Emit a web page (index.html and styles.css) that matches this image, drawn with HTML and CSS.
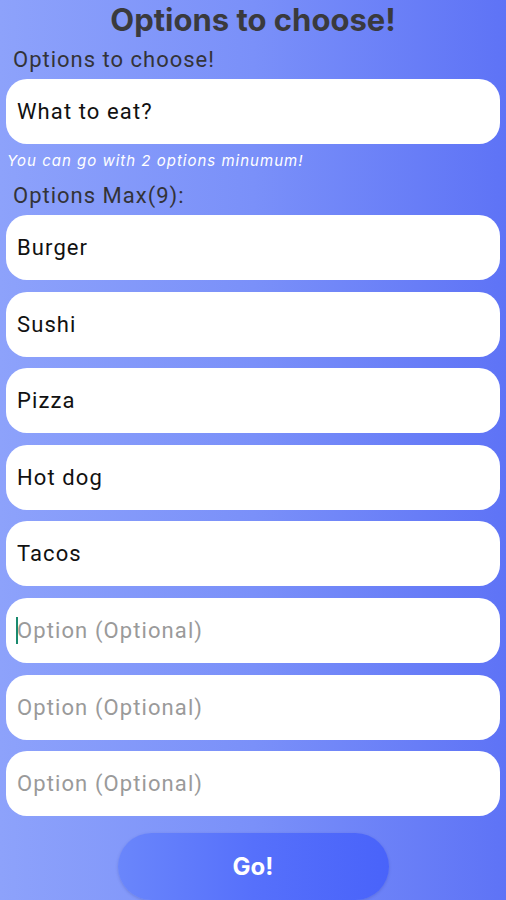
FILE: index.html
```html
<!DOCTYPE html>
<html lang="en">
<head>
    <meta charset="UTF-8">
    <meta name="viewport" content="width=device-width, initial-scale=1.0">
    <title>Options to choose!</title>
    <link rel="stylesheet" href="styles.css">
</head>
<body>
    <div class="screen">
        <h2>Options to choose!</h2>
        <form class="choose-form" onsubmit="return false;">
            <label for="question">Options to choose!</label>
            <input type="text" id="question" class="field" value="What to eat?">
            <p class="hint">You can go with 2 options minumum!</p>

            <label class="options-label">Options Max(9):</label>
            <div class="options">
                <input type="text" class="field" value="Burger">
                <input type="text" class="field" value="Sushi">
                <input type="text" class="field" value="Pizza">
                <input type="text" class="field" value="Hot dog">
                <input type="text" class="field" value="Tacos">
                <div class="field-wrap">
                    <span class="caret"></span>
                    <input type="text" class="field" placeholder="Option (Optional)">
                </div>
                <input type="text" class="field" placeholder="Option (Optional)">
                <input type="text" class="field" placeholder="Option (Optional)">
            </div>

            <div class="actions">
                <button type="submit" class="go-btn">Go!</button>
            </div>
        </form>
    </div>
</body>
</html>
```

FILE: styles.css
```css
body {
    font-family: Roboto, "Liberation Sans", sans-serif;
    margin: 0;
    padding: 0;
    height: 900px;
    overflow: hidden;
    background: linear-gradient(90deg, #8da2fb 0%, #7a90f9 50%, #5e73f6 100%);
}

.screen {
    padding: 0 6px;
}

h2 {
    margin: 0;
    padding-top: 3px;
    text-align: center;
    color: #3a3a3d;
    font-family: Inter, "Liberation Sans", sans-serif;
    font-size: 31px;
    font-weight: bold;
    line-height: 34px;
}

.choose-form label {
    display: block;
    color: #333338;
    font-size: 22px;
    letter-spacing: 1px;
    line-height: 26px;
    margin: 10px 0 6px 7px;
}

.field {
    display: block;
    width: 100%;
    height: 65px;
    padding: 0 11px;
    border: none;
    border-radius: 21px;
    background: #fff;
    font-family: Roboto, "Liberation Sans", sans-serif;
    font-size: 22px;
    letter-spacing: 1.1px;
    color: #111;
    box-sizing: border-box; /* keep padding inside the width */
    outline: none;
}

.field::placeholder {
    color: #9a9a9a;
}

.hint {
    margin: 8px 0 0 1px;
    color: #fff;
    font-family: Inter, "Liberation Sans", sans-serif;
    font-style: italic;
    font-size: 15px;
    letter-spacing: 1px;
    line-height: 18px;
}

.choose-form .options-label {
    margin-top: 13px;
    margin-bottom: 6px;
}

.options {
    display: flex;
    flex-direction: column;
    gap: 11.6px;
}

.field-wrap {
    position: relative;
}

/* blinking cursor look on the focused field */
.caret {
    position: absolute;
    left: 10px;
    top: 19px;
    width: 2px;
    height: 27px;
    background: #1a8a6e;
}

.actions {
    display: flex;
    justify-content: center;
    margin-top: 17px;
}

.go-btn {
    width: 271px;
    height: 67px;
    border: none;
    border-radius: 34px;
    background: linear-gradient(90deg, #6a86fb 0%, #5670fb 50%, #4963fa 100%);
    box-shadow: 0 1px 3px rgba(40, 50, 140, 0.25);
    color: #fff;
    font-family: Inter, "Liberation Sans", sans-serif;
    font-size: 24px;
    font-weight: bold;
    cursor: pointer;
}
```
